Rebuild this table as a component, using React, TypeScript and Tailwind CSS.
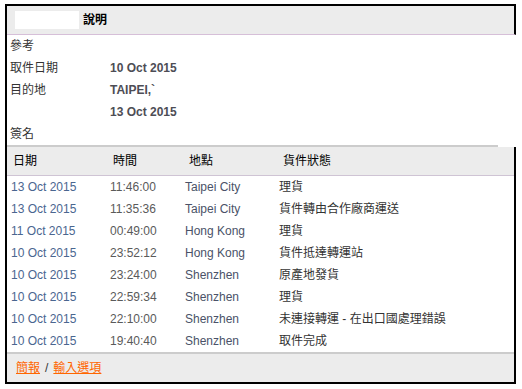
import React from "react";

const rows = [
  ["13 Oct 2015", "11:46:00", "Taipei City", "理貨"],
  ["13 Oct 2015", "11:35:36", "Taipei City", "貨件轉由合作廠商運送"],
  ["11 Oct 2015", "00:49:00", "Hong Kong", "理貨"],
  ["10 Oct 2015", "23:52:12", "Hong Kong", "貨件抵達轉運站"],
  ["10 Oct 2015", "23:24:00", "Shenzhen", "原產地發貨"],
  ["10 Oct 2015", "22:59:34", "Shenzhen", "理貨"],
  ["10 Oct 2015", "22:10:00", "Shenzhen", "未連接轉運 - 在出口國處理錯誤"],
  ["10 Oct 2015", "19:40:40", "Shenzhen", "取件完成"],
];

const font = { fontFamily: '"Liberation Sans", Arial, "Noto Sans CJK TC", sans-serif' };

export default function App() {
  return (
    <div className="w-[522px] h-[389px] bg-white pt-[4px] pl-[5px]" style={font}>
      <div className="w-[511px] border-l-2 border-t-2 border-b-2 border-black text-[12px] leading-none">
        {/* header */}
        <div className="h-[29px] bg-[#ececec] border-b border-[#d6bfd8] border-r-2 border-r-black flex items-center">
          <div className="ml-[8px] w-[64px] h-[18px] bg-white" />
          <div className="ml-[4px] font-bold text-black">說明</div>
        </div>
        {/* info */}
        <div className="w-[491px] border-b-2 border-[#cccccc] text-[#333]">
          {[
            ["參考", ""],
            ["取件日期", "10 Oct 2015"],
            ["目的地", "TAIPEI,`"],
            ["", "13 Oct 2015"],
            ["簽名", ""],
          ].map(([l, v], i) => (
            <div key={i} className="h-[22px] flex items-center">
              <div className="w-[103px] pl-[3px]">{l}</div>
              <div className="font-bold text-[#4d4d55]">{v}</div>
            </div>
          ))}
        </div>
        {/* table */}
        <div className="border-r-2 border-black">
          <div className="h-[29px] bg-[#ececec] border-b border-[#cfc4d4] grid grid-cols-[100px_75px_94px_1fr] items-center text-black">
            <div className="pl-[6px]">日期</div>
            <div className="pl-[6px]">時間</div>
            <div className="pl-[7px]">地點</div>
            <div className="pl-[7px]">貨件狀態</div>
          </div>
          {rows.map((r, i) => (
            <div key={i} className="h-[22px] grid grid-cols-[100px_75px_94px_1fr] items-center">
              <div className="pl-[4px] text-[#4a6690]">{r[0]}</div>
              <div className="pl-[3px] text-[#5a5a5a]">{r[1]}</div>
              <div className="pl-[3px] text-[#4a5268]">{r[2]}</div>
              <div className="pl-[3px] text-[#333]">{r[3]}</div>
            </div>
          ))}
          <div className="h-[30px] bg-[#ececec] border-t-2 border-[#cccccc] flex items-center pl-[9px]">
            <span className="text-[#ff6600] underline">簡報</span>
            <span className="mx-[5px] text-[#333]">/</span>
            <span className="text-[#ff6600] underline">輸入選項</span>
          </div>
        </div>
      </div>
    </div>
  );
}
